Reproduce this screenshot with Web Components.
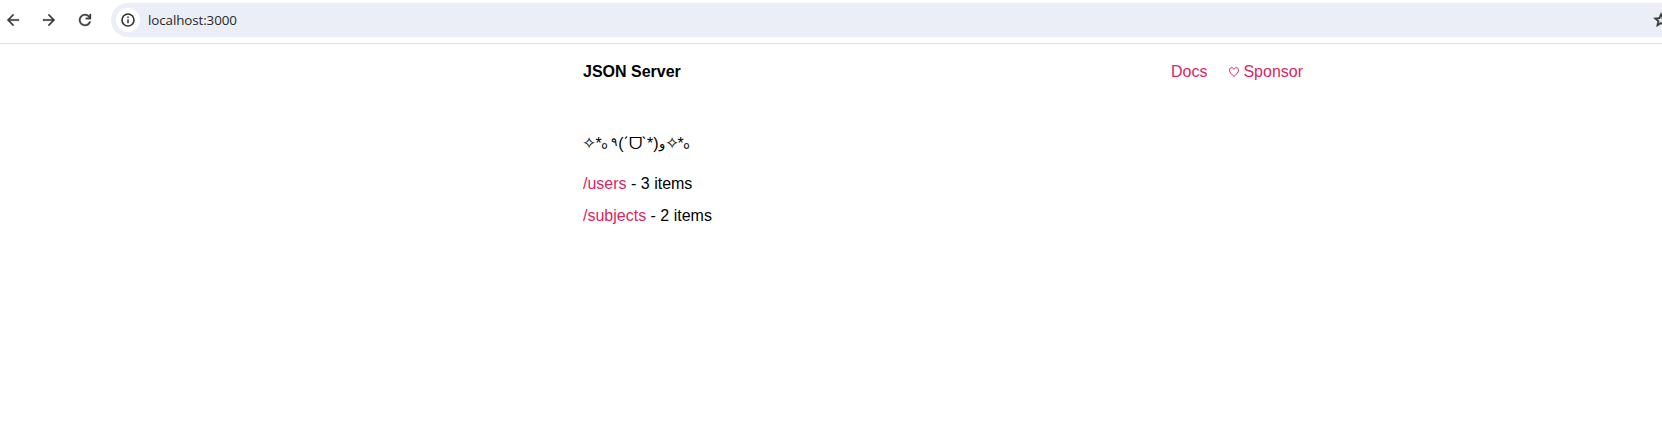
<!DOCTYPE html>
<html lang="en">
<head>
<meta charset="utf-8">
<title>JSON Server</title>
<style>
body{margin:0;background:#fff;font:16px/24px "Liberation Sans",Arial,sans-serif;color:#000}
</style>
</head>
<body>
<browser-bar>localhost:3000</browser-bar>
<server-page>
  <nav-link slot="nav">Docs</nav-link>
  <nav-link slot="nav" heart>Sponsor</nav-link>
  <resource-item path="/users">3 items</resource-item>
  <resource-item path="/subjects">2 items</resource-item>
</server-page>
<script>
const define = (name, html) => customElements.define(name, class extends HTMLElement {
  connectedCallback() {
    if (this.shadowRoot) return;
    const t = document.createElement('template');
    t.innerHTML = typeof html === 'function' ? html(this) : html;
    this.attachShadow({mode: 'open'}).append(t.content.cloneNode(true));
  }
});

define('browser-bar', `
<style>
:host{display:flex;align-items:center;box-sizing:border-box;height:44px;padding:0 0 4px 4px;border-bottom:1px solid #dfdfdf;overflow:hidden}
svg{display:block;flex:none;fill:#3c3c3c}
.nav{display:flex;gap:18px;width:107px;flex:none}
.field{display:flex;align-items:center;flex:1;height:34px;box-sizing:border-box;padding-left:5px;border-radius:17px 0 0 17px;background:#ebeef7;min-width:0}
.info{display:flex;align-items:center;justify-content:center;width:24px;height:24px;border-radius:50%;background:#fff;margin-right:8px;flex:none}
.url{flex:1;font:13.4px/20px "Open Sans",sans-serif;letter-spacing:-.1px;color:#26282c}
.star{margin-right:-8px}
</style>
<div class="nav">
<svg width="18" height="18" viewBox="0 0 24 24"><path d="m7.8 13 5.6 5.6L12 20l-8-8 8-8 1.4 1.4L7.8 11H20v2z" stroke="#3c3c3c" stroke-width=".4"/></svg>
<svg width="18" height="18" viewBox="0 0 24 24"><path d="m16.2 13-5.6 5.6L12 20l8-8-8-8-1.4 1.4 5.6 5.6H4v2z" stroke="#3c3c3c" stroke-width=".4"/></svg>
<svg width="18" height="18" viewBox="0 0 24 24"><path d="M12 20a8 8 0 1 1 6-13.25V4h2v7h-7V9h4.2A6 6 0 1 0 17.65 14h2.1A8 8 0 0 1 12 20z" stroke="#3c3c3c" stroke-width=".4"/></svg>
</div>
<div class="field">
<span class="info"><svg width="14" height="14" viewBox="0 0 14 14"><circle cx="7" cy="7" r="6" fill="none" stroke="#303134" stroke-width="1.6"/><path d="M6.2 6.2h1.6v4H6.2zM6.2 3.6h1.6v1.5H6.2z"/></svg></span>
<span class="url"><slot></slot></span>
<svg class="star" width="18" height="18" viewBox="0 0 24 24"><path d="m8.85 16.83 3.15-1.9 3.15 1.92-.83-3.6 2.78-2.4-3.65-.32L12 7.13l-1.45 3.38-3.65.32 2.78 2.43zM5.83 21l1.62-7.03L2 9.25l7.2-.63L12 2l2.8 6.62 7.2.63-5.45 4.72L18.17 21 12 17.27z" stroke="#3c3c3c" stroke-width=".5"/></svg>
</div>`);

define('nav-link', el => `
<style>
:host{display:flex;align-items:center;color:#d92662}
svg{display:block;margin:0 4.5px 0 .5px}
</style>
${el.hasAttribute('heart') ? '<svg width="10" height="10" viewBox="0 0 10 10"><path d="M5 9.4C3.2 7.9.5 5.5.5 3.2.5 1.6 1.5.6 2.8.6 3.9.6 4.7 1.4 5 2.3 5.3 1.4 6.1.6 7.2.6c1.3 0 2.3 1 2.3 2.6C9.5 5.5 6.8 7.9 5 9.4z" fill="none" stroke="#d92662"/></svg>' : ''}
<slot></slot>`);

define('resource-item', el => `
<style>:host{display:block;height:24px}span{color:#d92662}</style><span>${el.getAttribute('path')}</span> - <slot></slot>`);

define('kao-moji', () => {
  const glyphs = [['✧',13],['*',6],['｡',8],['٩',9],['(',5],['ˊ',5],['ᗜ',13],['ˋ',5],['*',7],[')',5],['و',7],['✧',12],['*',6],['｡',6]];
  return `<style>
:host{display:flex;height:24px}
span{display:flex;justify-content:center;flex:none;unicode-bidi:isolate}
.g0,.g11{font-size:17px}
.g2,.g13{font-family:"Noto Sans CJK JP",sans-serif;justify-content:flex-start;line-height:16px;-webkit-text-stroke:.2px}
.g3{font-size:12px;line-height:20px}
.g10{font-size:13px}
</style>` + glyphs.map(([g, w], i) => `<span class="g${i}" style="width:${w}px">${g}</span>`).join('');
});

define('server-page', `
<style>
:host{display:block;width:720px;margin-left:583px;padding-top:16px}
header{display:flex;justify-content:space-between;height:24px}
nav{display:flex;gap:21px}
main{display:flex;flex-direction:column;gap:8px;padding-top:48px}
kao-moji{margin:0 0 8px -.5px}
</style>
<header><b>JSON Server</b><nav><slot name="nav"></slot></nav></header>
<main><kao-moji></kao-moji><slot></slot></main>`);
</script>
</body>
</html>
